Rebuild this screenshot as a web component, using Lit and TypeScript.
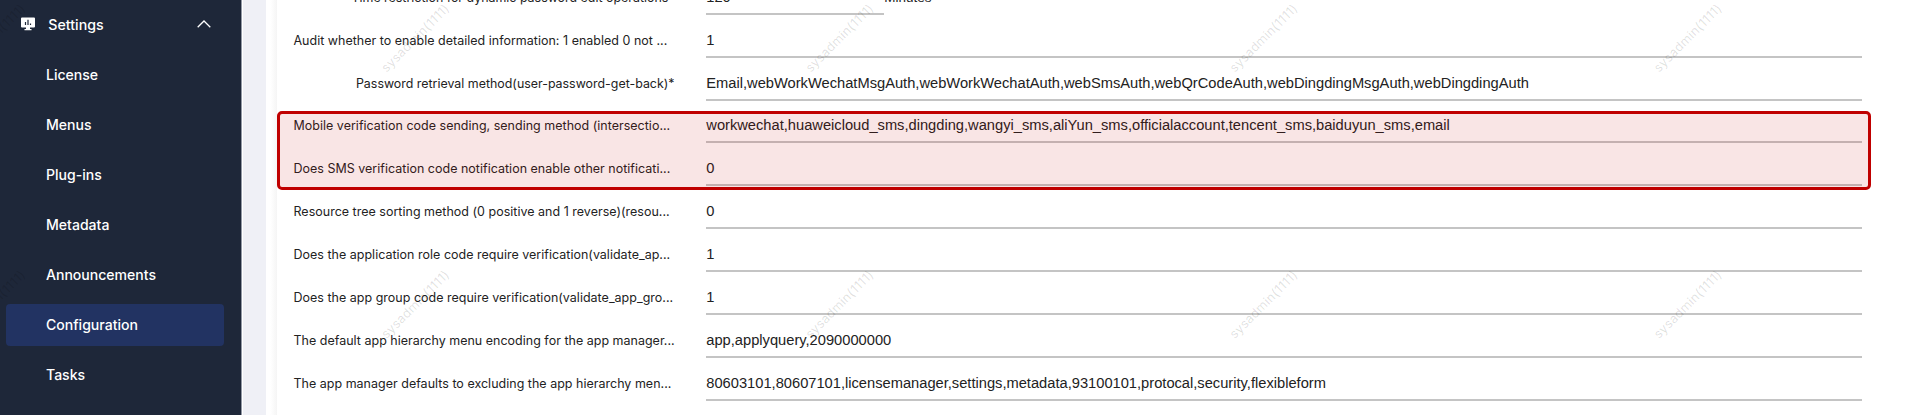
import { LitElement, html, svg, css } from "lit";
import { customElement } from "lit/decorators.js";
import { classMap } from "lit/directives/class-map.js";

interface Field { label: string; value: string; required?: boolean; unit?: string; }

const MENU = ["License", "Menus", "Plug-ins", "Metadata", "Announcements", "Configuration", "Tasks"];

const FIELDS: Field[] = [
  { label: "Time restriction for dynamic password edit operations", value: "120", unit: "Minutes", required: true },
  { label: "Audit whether to enable detailed information: 1 enabled 0 not ...", value: "1" },
  { label: "Password retrieval method(user-password-get-back)", value: "Email,webWorkWechatMsgAuth,webWorkWechatAuth,webSmsAuth,webQrCodeAuth,webDingdingMsgAuth,webDingdingAuth", required: true },
  { label: "Mobile verification code sending, sending method (intersectio...", value: "workwechat,huaweicloud_sms,dingding,wangyi_sms,aliYun_sms,officialaccount,tencent_sms,baiduyun_sms,email" },
  { label: "Does SMS verification code notification enable other notificati...", value: "0" },
  { label: "Resource tree sorting method (0 positive and 1 reverse)(resou...", value: "0" },
  { label: "Does the application role code require verification(validate_ap...", value: "1" },
  { label: "Does the app group code require verification(validate_app_gro...", value: "1" },
  { label: "The default app hierarchy menu encoding for the app manager...", value: "app,applyquery,2090000000" },
  { label: "The app manager defaults to excluding the app hierarchy men...", value: "80603101,80607101,licensemanager,settings,metadata,93100101,protocal,security,flexibleform" },
];

@customElement("app-root")
export class AppRoot extends LitElement {
  static styles = css`
    :host { display: block; position: relative; height: 416px; overflow: hidden; background: #fff; font-family: Inter, "Liberation Sans", sans-serif; }
    .layout { display: flex; height: 415px; }
    .side { width: 242px; box-sizing: border-box; background: #1e2739; padding-left: 6px; border-right: 1px solid #9298a5; flex: none; }
    .group { display: flex; align-items: center; height: 48px; padding-left: 15px; color: #fff; }
    .title { font-size: 14.2px; font-weight: 500; margin-left: 13.3px; flex: 1; }
    .arrow { margin-right: 30px; }
    .menu { padding-top: 5.6px; }
    .item { width: 218px; height: 42px; margin-bottom: 8.14px; box-sizing: border-box; padding-left: 40px; line-height: 41.5px; border-radius: 4px; color: #fff; font-size: 14.05px; font-weight: 500; }
    .item.on { background: #223362; }
    .gutter { width: 23px; background: #eff0f6; border-left: 1px solid #fff; flex: none; }
    .edge { width: 11px; background: linear-gradient(90deg, #fff 40%, #f5f5f5); flex: none; }
    .form { flex: 1; padding-left: 16.500px; margin-top: -28.2px; }
    .row { display: flex; height: 42.86px; }
    .label { width: 381px; font-size: 12.46px; letter-spacing: .03px; line-height: 52.2px; color: #222; white-space: nowrap; }
    .label.required { text-align: right; font-size: 12.42px; letter-spacing: 0; }
    .value { box-sizing: border-box; width: 1156px; height: 43px; margin-left: 31.8px; border-bottom: 2px solid #c4c4c4; font: 14.68px/51.4px "Liberation Sans", Arial, sans-serif; color: #222; white-space: nowrap; }
    .value.short { width: 178px; }
    .unit { font: 13.5px/51px "Liberation Sans", Arial, sans-serif; color: #222; }
    .mark { position: absolute; left: 277px; top: 111px; width: 1594px; height: 79px; box-sizing: border-box; border: 3px solid #c00000; border-radius: 5px; background: rgba(192, 0, 0, .1); }
    .wm { position: absolute; inset: 0; width: 1920px; height: 416px; pointer-events: none; }
    .wm text { font: 12.7px Inter, sans-serif; letter-spacing: .22px; fill: #000; fill-opacity: .13; }
  `;

  render() {
    return html`
      <div class="layout">
        <nav class="side">
          <div class="group">
            <svg width="14" height="14" viewBox="0 0 14 14"><path fill="#fff" d="M1 .5h12a1 1 0 0 1 1 1v8a1 1 0 0 1-1 1H9V12h1.500v1.200h-7V12H5v-1.500H1a1 1 0 0 1-1-1v-8a1 1 0 0 1 1-1z"/><path stroke="#1e2739" stroke-width="1.200" d="M4.500 5v3M7 2.700v5.300M9.500 6.500V8"/></svg>
            <span class="title">Settings</span>
            <svg class="arrow" width="14" height="8" viewBox="0 0 14 8"><path d="M.7 7.200 7 1l6.300 6.200" fill="none" stroke="#fff" stroke-width="1.300"/></svg>
          </div>
          <div class="menu">
            ${MENU.map((m) => html`<div class=${classMap({ item: true, on: m === "Configuration" })}>${m}</div>`)}
          </div>
        </nav>
        <div class="gutter"></div>
        <div class="edge"></div>
        <main class="form">
          ${FIELDS.map((f) => html`
            <div class="row">
              <div class=${classMap({ label: true, required: !!f.required })}>${f.label}${f.required ? "*" : ""}</div>
              <div class=${classMap({ value: true, short: !!f.unit })}>${f.value}</div>
              ${f.unit ? html`<div class="unit">${f.unit}</div>` : null}
            </div>`)}
        </main>
      </div>
      <svg class="wm">
        ${[0, 1, 2, 3, 4].map((c) => [0, 1].map((r) =>
          svg`<text transform="translate(${-37.5 + c * 424.1} ${73 + r * 266.3}) rotate(-45)">sysadmin(1111)</text>`))}
      </svg>
      <div class="mark"></div>
    `;
  }
}
